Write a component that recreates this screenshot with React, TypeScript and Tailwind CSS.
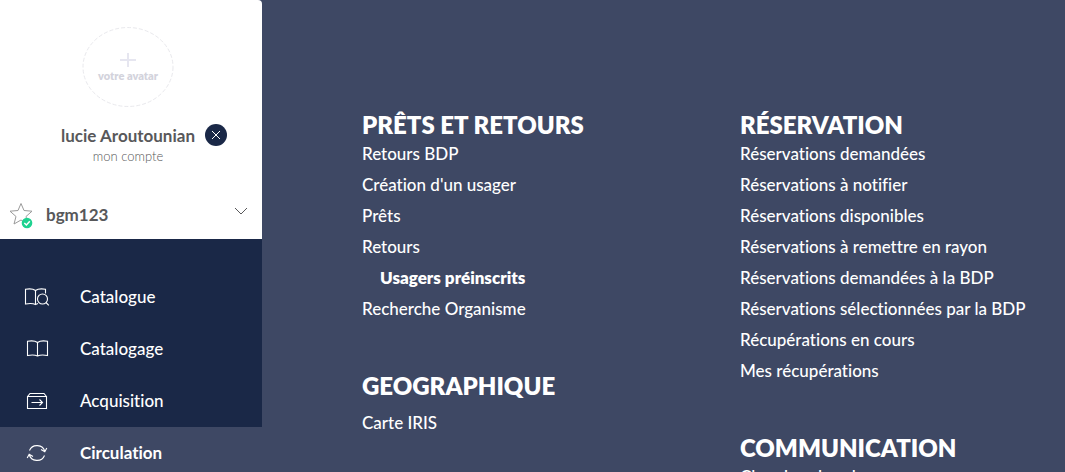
const menuSections = [
  [
    {
      title: 'PRÊTS ET RETOURS',
      spaced: false,
      links: [
        { label: 'Retours BDP' },
        { label: "Création d'un usager" },
        { label: 'Prêts' },
        { label: 'Retours' },
        { label: 'Usagers préinscrits', active: true },
        { label: 'Recherche Organisme' },
      ],
    },
    { title: 'GEOGRAPHIQUE', spaced: true, links: [{ label: 'Carte IRIS' }] },
  ],
  [
    {
      title: 'RÉSERVATION',
      spaced: false,
      links: [
        { label: 'Réservations demandées' },
        { label: 'Réservations à notifier' },
        { label: 'Réservations disponibles' },
        { label: 'Réservations à remettre en rayon' },
        { label: 'Réservations demandées à la BDP' },
        { label: 'Réservations sélectionnées par la BDP' },
        { label: 'Récupérations en cours' },
        { label: 'Mes récupérations' },
      ],
    },
    { title: 'COMMUNICATION', spaced: false, links: [{ label: 'Chercher dans les' }] },
  ],
];

const iconProps = {
  width: 26,
  height: 20,
  viewBox: '0 0 26 20',
  fill: 'none',
  stroke: 'currentColor',
  strokeWidth: 1.1,
  'aria-hidden': true,
};

function SearchBookIcon() {
  return (
    <svg {...iconProps}>
      <path d="M11.5 3.5C9 1.7 5 1.7 1.5 2.3V17C5 16.3 9 16.3 11.5 17.5V3.5C14 1.7 18 1.7 21.5 2.3V6.5M11.5 17.5L14 16.6" />
      <circle cx="18.500" cy="12" r="5" />
      <path d="M22 15.5L24.800 18.300" />
    </svg>
  );
}

function BookIcon() {
  return (
    <svg {...iconProps}>
      <path d="M13.500 3.500C11 1.700 7 1.700 3.500 2.300V16.500C7 15.800 11 15.800 13.500 17C16 15.800 20 15.800 23.500 16.500V2.300C20 1.700 16 1.700 13.500 3.500ZV17" />
    </svg>
  );
}

function BoxIcon() {
  return (
    <svg {...iconProps}>
      <path d="M3.5 5.5H22.5V17.5H3.5ZM3.5 5.5L6 2.500H20L22.5 5.500M7.500 11.500H18.500M15.500 8.500L18.500 11.500L15.500 14.500" />
    </svg>
  );
}

function CycleIcon() {
  return (
    <svg {...iconProps}>
      <path d="M5.500 7.500A8 7.500 0 0 1 20.800 8.500M20.500 12.500A8 7.500 0 0 1 5.200 11.500M17 6.500L20.800 8.800L22.800 5M9 13.500L5.200 11.200L3.200 15" />
    </svg>
  );
}

const navItems = [
  { label: 'Catalogue', Icon: SearchBookIcon },
  { label: 'Catalogage', Icon: BookIcon },
  { label: 'Acquisition', Icon: BoxIcon },
  { label: 'Circulation', Icon: CycleIcon, active: true },
];

function Account() {
  return (
    <section className="rounded-tr bg-white text-[#58585a]">
      <div className="flex flex-col items-center pt-[26px] pr-1.5">
        <button type="button" className="relative flex h-[82px] w-[92px] flex-col items-center pt-6 text-[#d3d3dc]">
          <svg className="absolute inset-0" width="92" height="82" viewBox="0 0 92 82" fill="none" aria-hidden="true">
            <ellipse cx="46" cy="41" rx="45" ry="39.5" stroke="#e9e9ed" strokeDasharray="4 2" />
            <path d="M38 34H54M46 27V41" stroke="#e6e6f0" strokeWidth="2" />
          </svg>
          <span className="mt-5 text-[11px] leading-3 font-extrabold">votre avatar</span>
        </button>
        <div className="relative mt-4">
          <a href="#compte" className="block text-center">
            <span className="block text-[17px] leading-6 font-bold">lucie Aroutounian</span>
            <span className="block text-[13px] leading-4 font-light">mon compte</span>
          </a>
          <button
            type="button"
            aria-label="Déconnexion"
            className="absolute top-0 left-full ml-2.5 flex size-[22px] items-center justify-center rounded-full bg-[#1a2847] text-white"
          >
            <svg width="10" height="10" viewBox="0 0 10 10" stroke="currentColor" aria-hidden="true">
              <path d="M1 1L9 9M9 1L1 9" />
            </svg>
          </button>
        </div>
      </div>
      <button type="button" className="mt-[37px] flex w-full items-center pb-2.5 pl-2 text-left">
        <svg width="28" height="28" viewBox="0 0 28 28" fill="none" aria-hidden="true">
          <path d="M13 2.500L16 9.500L24 10.200L18 15.500L19.500 23L13 19L6 23L8 15.500L2 10.200L10 9.500Z" stroke="#9a9a9a" />
          <circle cx="19" cy="22" r="5.300" fill="#1ed290" />
          <path d="M16.300 22L18.400 24L21.800 20.300" stroke="white" strokeWidth="1.500" />
        </svg>
        <span className="ml-2.5 flex-1 text-[17px] leading-6 font-bold">bgm123</span>
        <svg className="mr-3.5 mb-2" width="14" height="8" viewBox="0 0 14 8" fill="none" stroke="#58585a" aria-hidden="true">
          <path d="M1 1L7 7L13 1" />
        </svg>
      </button>
    </section>
  );
}

export default function App() {
  return (
    <div className="flex h-screen overflow-hidden bg-[#3e4864] font-[Lato,'Liberation_Sans',sans-serif] text-white [font-variant-ligatures:none]">
      <aside className="w-[262px] shrink-0">
        <Account />
        <nav className="bg-[#1a2847] pt-8">
          {navItems.map(({ label, Icon, active }) => (
            <a
              key={label}
              href="#menu"
              className={`flex h-[52px] items-center gap-[30px] pl-6 text-[17px] ${active ? 'bg-[#3e4864] font-bold' : 'font-medium'}`}
            >
              <Icon />
              {label}
            </a>
          ))}
        </nav>
      </aside>

      <main className="flex flex-1 pt-28 pl-[100px]">
        {menuSections.map((column, index) => (
          <div key={index} className="w-[378px] shrink-0">
            {column.map(({ title, spaced, links }) => (
              <section key={title} className="mb-[49px]">
                <h2 className={`text-2xl leading-[26px] font-extrabold ${spaced ? 'mb-2' : ''}`}>{title}</h2>
                <ul>
                  {links.map((link) => (
                    <li key={link.label} className={`text-[17px] leading-[31px] ${'active' in link ? 'pl-[18px] font-extrabold' : 'font-medium'}`}>
                      <a href="#page">{link.label}</a>
                    </li>
                  ))}
                </ul>
              </section>
            ))}
          </div>
        ))}
      </main>
    </div>
  );
}
